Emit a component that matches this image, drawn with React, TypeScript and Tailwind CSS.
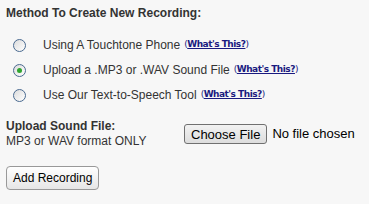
import React from "react";

const options = [
  { label: "Using A Touchtone Phone", checked: false },
  { label: "Upload a .MP3 or .WAV Sound File", checked: true },
  { label: "Use Our Text-to-Speech Tool", checked: false },
];

function Radio({ checked }: { checked: boolean }) {
  return (
    <span className="w-[13px] h-[13px] rounded-full border border-[#4a6a90] bg-gradient-to-br from-[#dcdcdc] to-white flex items-center justify-center shrink-0">
      {checked && <span className="w-[5px] h-[5px] rounded-full bg-[#2fa52f]" />}
    </span>
  );
}

export default function App() {
  return (
    <div className="w-[369px] h-[204px] bg-[#f7f7f7] text-[#333] font-['Liberation_Sans',Arial,sans-serif] text-[12px] px-[6px] pt-[6px]">
      <div className="font-bold text-[12px] leading-[14px]">Method To Create New Recording:</div>

      <div className="mt-[18px] flex flex-col gap-[11px]">
        {options.map((o) => (
          <div key={o.label} className="flex items-center h-[14px]">
            <span className="ml-[7px] mr-[17px]">
              <Radio checked={o.checked} />
            </span>
            <span className="leading-[14px]">{o.label}</span>
            <span className="ml-[4px] text-[9px] tracking-[-0.5px] font-['DejaVu_Sans',Verdana,sans-serif] text-[#1a1a80]">
              (<a className="underline font-bold">What's This?</a>)
            </span>
          </div>
        ))}
      </div>

      <div className="mt-[17px] flex">
        <div className="w-[178px]">
          <div className="font-bold leading-[15px]">Upload Sound File:</div>
          <div className="leading-[15px]">MP3 or WAV format ONLY</div>
        </div>
        <div className="flex items-center h-[20px] mt-[5px]">
          <button className="h-[20px] px-[6px] border border-[#707070] rounded-[3px] bg-gradient-to-b from-[#f2f2f2] to-[#dddddd] text-[13px] text-black leading-none">
            Choose File
          </button>
          <span className="ml-[5px] text-[13px] text-black">No file chosen</span>
        </div>
      </div>

      <button className="mt-[17px] h-[24px] px-[6px] border border-[#999] rounded-[4px] bg-gradient-to-b from-white to-[#e6e6e6] text-[12px] text-black">
        Add Recording
      </button>
    </div>
  );
}
